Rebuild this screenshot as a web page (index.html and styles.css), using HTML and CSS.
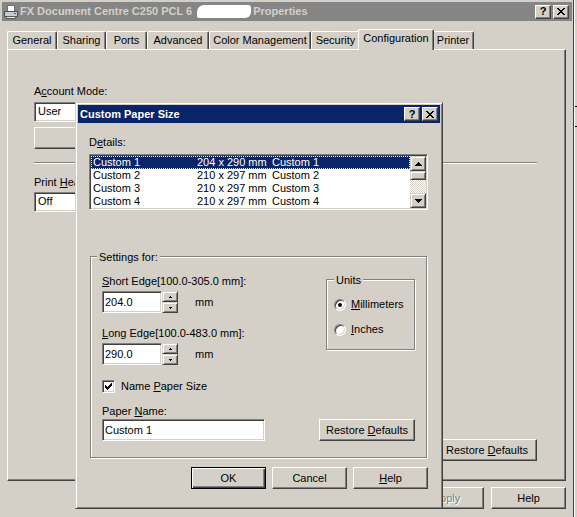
FILE: index.html
```html
<!DOCTYPE html>
<html>
<head>
  <title>Custom Paper Size</title>
  <link rel="stylesheet" href="styles.css">
</head>
<body>
  <div class="desk">
    <div class="win">
      <div class="titlebar inactive">
        <svg class="app-icon" viewBox="0 0 16 16">
          <rect x="4.5" y="1.5" width="7" height="6" fill="#ffffff" stroke="#707070"/>
          <path d="M1.5 7.5h13v5h-13z" fill="#c8ccd6" stroke="#4a4a58"/>
          <path d="M3.5 12.5h9v2h-9z" fill="#ececec" stroke="#5a5a5a"/>
          <rect x="11" y="9" width="2" height="1" fill="#2f7f2f"/>
        </svg>
        <span class="title-text">FX Document Centre C250 PCL 6<span class="redact"></span>Properties</span>
        <span class="cap-btn">?</span>
        <span class="cap-btn">
          <svg class="x-glyph" viewBox="0 0 8 7"><path d="M0 0h2v1h-2zM6 0h2v1h-2zM1 1h2v1h-2zM5 1h2v1h-2zM2 2h4v1h-4zM3 3h2v1h-2zM2 4h4v1h-4zM1 5h2v1h-2zM5 5h2v1h-2zM0 6h2v1h-2zM6 6h2v1h-2z"/></svg>
        </span>
      </div>

      <div class="tabs">
        <div class="tab t-general">General</div>
        <div class="tab t-sharing">Sharing</div>
        <div class="tab t-ports">Ports</div>
        <div class="tab t-advanced">Advanced</div>
        <div class="tab t-color">Color Management</div>
        <div class="tab t-security">Security</div>
        <div class="tab active t-config">Configuration</div>
        <div class="tab t-printer">Printer</div>
      </div>

      <div class="panel">
        <div class="lbl">A<u>c</u>count Mode:</div>
        <div class="edit combo">User</div>
        <button class="btn wide-btn"></button>
        <div class="sep"></div>
        <div class="lbl lbl-print">Print <u>H</u>eader Sheet:</div>
        <div class="edit combo combo-off">Off</div>
        <button class="btn restore-outer"><span>Restore <u>D</u>efaults</span></button>
      </div>

      <div class="win-btns">
        <button class="btn">OK</button>
        <button class="btn">Cancel</button>
        <button class="btn disabled">Apply</button>
        <button class="btn">Help</button>
      </div>
    </div>
    <div class="side">
      <div class="side-mark mark-1"></div>
      <div class="side-mark mark-2"></div>
    </div>
  </div>

  <div class="dialog">
    <div class="titlebar active">
      <span class="title-text">Custom Paper Size</span>
      <span class="cap-btn">?</span>
      <span class="cap-btn">
        <svg class="x-glyph" viewBox="0 0 8 7"><path d="M0 0h2v1h-2zM6 0h2v1h-2zM1 1h2v1h-2zM5 1h2v1h-2zM2 2h4v1h-4zM3 3h2v1h-2zM2 4h4v1h-4zM1 5h2v1h-2zM5 5h2v1h-2zM0 6h2v1h-2zM6 6h2v1h-2z"/></svg>
      </span>
    </div>

    <div class="dlg-body">
      <div class="lbl">D<u>e</u>tails:</div>
      <div class="listbox">
        <div class="rows">
          <div class="row sel"><span>Custom 1</span><span>204 x 290 mm</span><span>Custom 1</span></div>
          <div class="row"><span>Custom 2</span><span>210 x 297 mm</span><span>Custom 2</span></div>
          <div class="row"><span>Custom 3</span><span>210 x 297 mm</span><span>Custom 3</span></div>
          <div class="row"><span>Custom 4</span><span>210 x 297 mm</span><span>Custom 4</span></div>
        </div>
        <div class="vscroll">
          <div class="raised sb-btn">
            <svg class="arrow7" viewBox="0 0 7 4"><path d="M3 0h1v1h-1zM2 1h3v1h-3zM1 2h5v1h-5zM0 3h7v1h-7z"/></svg>
          </div>
          <div class="raised sb-thumb"></div>
          <div class="sb-track"></div>
          <div class="raised sb-btn">
            <svg class="arrow7" viewBox="0 0 7 4"><path d="M0 0h7v1h-7zM1 1h5v1h-5zM2 2h3v1h-3zM3 3h1v1h-1z"/></svg>
          </div>
        </div>
      </div>

      <div class="group settings">
        <div class="group-label">Settings for:</div>
        <div class="settings-top">
          <div class="edges">
            <div class="lbl"><u>S</u>hort Edge[100.0-305.0 mm]:</div>
            <div class="spin-row">
              <div class="edit num">204.0</div>
              <div class="spin">
                <div class="raised spin-btn"><svg class="arrow3" viewBox="0 0 3 2"><path d="M1 0h1v1h-1zM0 1h3v1h-3z"/></svg></div>
                <div class="raised spin-btn"><svg class="arrow3" viewBox="0 0 3 2"><path d="M0 0h3v1h-3zM1 1h1v1h-1z"/></svg></div>
              </div>
              <span class="unit">mm</span>
            </div>
            <div class="lbl lbl-long"><u>L</u>ong Edge[100.0-483.0 mm]:</div>
            <div class="spin-row">
              <div class="edit num">290.0</div>
              <div class="spin">
                <div class="raised spin-btn"><svg class="arrow3" viewBox="0 0 3 2"><path d="M1 0h1v1h-1zM0 1h3v1h-3z"/></svg></div>
                <div class="raised spin-btn"><svg class="arrow3" viewBox="0 0 3 2"><path d="M0 0h3v1h-3zM1 1h1v1h-1z"/></svg></div>
              </div>
              <span class="unit">mm</span>
            </div>
          </div>

          <div class="group units">
            <div class="group-label">Units</div>
            <div class="radio-row first">
              <span class="radio checked"></span><span><u>M</u>illimeters</span>
            </div>
            <div class="radio-row">
              <span class="radio"></span><span><u>I</u>nches</span>
            </div>
          </div>
        </div>

        <div class="check-row">
          <span class="checkbox">
            <svg class="tick" viewBox="0 0 7 7"><path d="M6 0h1v3h-1zM5 1h1v3h-1zM4 2h1v3h-1zM0 2h1v3h-1zM1 3h1v3h-1zM2 4h1v3h-1zM3 3h1v3h-1z"/></svg>
          </span>
          <span>Name <u>P</u>aper Size</span>
        </div>

        <div class="lbl lbl-name">Paper <u>N</u>ame:</div>
        <div class="name-row">
          <div class="edit name">Custom 1</div>
          <button class="btn restore"><span>Restore <u>D</u>efaults</span></button>
        </div>
      </div>

      <div class="dlg-btns">
        <button class="btn default">OK</button>
        <button class="btn">Cancel</button>
        <button class="btn"><span><u>H</u>elp</span></button>
      </div>
    </div>
  </div>
</body>
</html>
```

FILE: styles.css
```css
* {
  box-sizing: border-box;
}

body {
  margin: 0;
  padding: 0;
  overflow: hidden;
  background-color: #d4d0c8;
  font-family: "Liberation Sans", Arial, sans-serif;
  font-size: 11px;
  line-height: 13px;
  color: #000000;
}

u {
  text-decoration-thickness: 1px;
  text-underline-offset: 1px;
}

/* ---- common controls ---- */

.btn {
  width: 75px;
  height: 22px;
  padding: 0;
  display: flex;
  align-items: center;
  justify-content: center;
  font: inherit;
  white-space: nowrap;
  color: #000000;
  background-color: #d4d0c8;
  border: 1px solid;
  border-color: #ffffff #404040 #404040 #ffffff;
  border-radius: 0;
  box-shadow: inset -1px -1px #808080;
}

.btn.default {
  border-color: #000000;
  box-shadow: inset 1px 1px #ffffff, inset -1px -1px #404040, inset -2px -2px #808080;
}

.btn.disabled {
  color: #808080;
  text-shadow: 1px 1px #ffffff;
}

.raised {
  background-color: #d4d0c8;
  border: 1px solid;
  border-color: #d4d0c8 #404040 #404040 #d4d0c8;
  box-shadow: inset 1px 1px #ffffff, inset -1px -1px #808080;
  display: flex;
  align-items: center;
  justify-content: center;
}

.edit {
  background-color: #ffffff;
  border: 1px solid;
  border-color: #808080 #ffffff #ffffff #808080;
  box-shadow: inset 1px 1px #404040, inset -1px -1px #d4d0c8;
  white-space: nowrap;
}

.desk {
  display: flex;
  height: 517px;
}

/* ---- outer properties window ---- */

.win {
  width: 574px;
  height: 517px;
  flex-shrink: 0;
  padding: 2px 1px 0 2px;
  border-right: 1px solid #404040;
  display: flex;
  flex-direction: column;
}

.side {
  flex: 1;
  border-left: 1px solid #ffffff;
  display: flex;
  flex-direction: column;
}

.side-mark {
  height: 1px;
  background-color: #000000;
}

.mark-1 {
  margin-top: 106px;
}

.mark-2 {
  margin-top: 19px;
}

.titlebar {
  display: flex;
  align-items: center;
  height: 19px;
  padding: 0 3px 0 1px;
}

.titlebar.inactive {
  background-color: #858585;
  color: #d4d0c8;
}

.titlebar.active {
  height: 18px;
  padding: 0 2px 0 2px;
  background-color: #0a246a;
  color: #ffffff;
}

.app-icon {
  width: 16px;
  height: 16px;
  margin-right: 1px;
  flex-shrink: 0;
}

.title-text {
  flex: 1;
  font-weight: bold;
  white-space: nowrap;
  overflow: hidden;
}

.redact {
  display: inline-block;
  width: 54px;
  height: 13px;
  margin: 0 2px 0 5px;
  vertical-align: -3px;
  background-color: #ffffff;
  border-radius: 7px 3px 6px 2px;
}

.cap-btn {
  width: 16px;
  height: 14px;
  flex-shrink: 0;
  display: flex;
  align-items: center;
  justify-content: center;
  background-color: #d4d0c8;
  border: 1px solid;
  border-color: #ffffff #404040 #404040 #ffffff;
  box-shadow: inset -1px -1px #808080;
  color: #000000;
  font-weight: bold;
  font-size: 11px;
}

.cap-btn + .cap-btn {
  margin-left: 2px;
}

.x-glyph {
  width: 8px;
  height: 7px;
  shape-rendering: crispEdges;
}

.tabs {
  display: flex;
  align-items: flex-end;
  height: 20px;
  margin: 8px 0 0 5px;
}

.tab {
  height: 18px;
  border: 1px solid;
  border-bottom: none;
  border-color: #ffffff #404040 #ffffff #ffffff;
  border-radius: 2px 2px 0 0;
  box-shadow: inset -1px 0 #808080;
  text-align: center;
  line-height: 17px;
  white-space: nowrap;
}

.tab.active {
  height: 21px;
  margin: 0 -2px -1px;
  position: relative;
  z-index: 1;
  background-color: #d4d0c8;
  line-height: 16px;
}

.t-general { width: 50px; }
.t-sharing { width: 49px; }
.t-ports { width: 41px; }
.t-advanced { width: 62px; }
.t-color { width: 102px; }
.t-security { width: 49px; }
.t-config { width: 76px; }
.t-printer { width: 42px; }

.panel {
  width: 559px;
  height: 432px;
  margin-left: 5px;
  padding: 35px 28px 19px 26px;
  border: 1px solid;
  border-color: #ffffff #404040 #404040 #ffffff;
  box-shadow: inset -1px -1px #808080;
  display: flex;
  flex-direction: column;
  align-items: flex-start;
}

.sep {
  align-self: stretch;
  height: 2px;
  margin-top: 13px;
  border-top: 1px solid #808080;
  border-bottom: 1px solid #ffffff;
}

.lbl-print {
  margin-top: 12px;
}

.combo {
  width: 236px;
  height: 20px;
  margin-top: 4px;
  line-height: 16px;
  padding-left: 3px;
}

.combo-off {
  margin-top: 3px;
}

.wide-btn {
  width: 100px;
  margin-top: 5px;
}

.restore-outer {
  width: 100px;
  margin-top: auto;
  align-self: flex-end;
}

.win-btns {
  display: flex;
  justify-content: flex-end;
  gap: 7px;
  margin-top: 6px;
  padding-right: 6px;
}

/* ---- custom paper size dialog ---- */

.dialog {
  position: absolute;
  left: 75px;
  top: 102px;
  width: 368px;
  height: 407px;
  padding: 2px;
  background-color: #d4d0c8;
  border: 1px solid;
  border-color: #d4d0c8 #404040 #404040 #d4d0c8;
  box-shadow: inset 1px 1px #ffffff, inset -1px -1px #808080;
  display: flex;
  flex-direction: column;
}

.dlg-body {
  padding: 13px 12px 0 11px;
  display: flex;
  flex-direction: column;
}

.listbox {
  display: flex;
  height: 56px;
  margin-top: 5px;
  padding: 1px;
  background-color: #ffffff;
  border: 1px solid;
  border-color: #808080 #ffffff #ffffff #808080;
  box-shadow: inset 1px 1px #404040, inset -1px -1px #d4d0c8;
}

.rows {
  flex: 1;
}

.row {
  display: grid;
  grid-template-columns: 104px 75px 1fr;
  height: 13px;
  line-height: 13px;
  padding-left: 2px;
  white-space: nowrap;
}

.row.sel {
  background-color: #0a246a;
  color: #ffffff;
  outline: 1px dotted #f0f0d0;
  outline-offset: -1px;
}

.vscroll {
  width: 16px;
  display: flex;
  flex-direction: column;
}

.sb-btn {
  height: 15px;
}

.sb-thumb {
  height: 9px;
}

.sb-track {
  flex: 1;
  background: repeating-conic-gradient(#ffffff 0 25%, #d4d0c8 0 50%) 0 0 / 2px 2px;
}

.arrow7 {
  width: 7px;
  height: 4px;
  shape-rendering: crispEdges;
}

.group {
  border: 1px solid #808080;
  box-shadow: inset 1px 1px #ffffff, 1px 1px #ffffff;
}

.group-label {
  width: fit-content;
  margin-top: -6px;
  padding: 0 2px;
  background-color: #d4d0c8;
}

.settings {
  margin: 46px 1px 0 1px;
  padding: 0 11px 16px 11px;
}

.settings > .group-label {
  margin-left: -5px;
}

.settings-top {
  display: flex;
  margin-top: 11px;
}

.spin-row {
  display: flex;
  align-items: center;
  margin-top: 3px;
}

.lbl-long {
  margin-top: 14px;
}

.num {
  width: 60px;
  height: 22px;
  padding-left: 2px;
  line-height: 20px;
}

.spin {
  width: 16px;
  height: 22px;
  display: flex;
  flex-direction: column;
}

.spin-btn {
  height: 11px;
}

.arrow3 {
  width: 3px;
  height: 2px;
  shape-rendering: crispEdges;
}

.unit {
  margin-left: 17px;
}

.units {
  width: 89px;
  height: 71px;
  margin: 4px 0 0 auto;
  padding-left: 7px;
}

.radio-row {
  display: flex;
  align-items: center;
  gap: 5px;
  height: 13px;
  margin-top: 12px;
}

.radio-row.first {
  margin-top: 11px;
}

.radio {
  width: 12px;
  height: 12px;
  border-radius: 50%;
  background-color: #ffffff;
  border: 1px solid;
  border-color: #808080 #ffffff #ffffff #808080;
  box-shadow: inset 1px 1px #404040, inset -1px -1px #d4d0c8;
  display: flex;
  align-items: center;
  justify-content: center;
}

.radio.checked::after {
  content: "";
  width: 4px;
  height: 4px;
  border-radius: 50%;
  background-color: #000000;
}

.check-row {
  display: flex;
  align-items: center;
  gap: 6px;
  height: 13px;
  margin-top: 15px;
}

.checkbox {
  width: 13px;
  height: 13px;
  background-color: #ffffff;
  border: 1px solid;
  border-color: #808080 #ffffff #ffffff #808080;
  box-shadow: inset 1px 1px #404040, inset -1px -1px #d4d0c8;
  display: flex;
  align-items: center;
  justify-content: center;
}

.tick {
  width: 7px;
  height: 7px;
  shape-rendering: crispEdges;
}

.lbl-name {
  margin-top: 12px;
}

.name-row {
  display: flex;
  margin-top: 1px;
}

.name {
  width: 163px;
  height: 22px;
  padding-left: 2px;
  line-height: 20px;
}

.restore {
  width: 96px;
  margin-left: auto;
}

.dlg-btns {
  display: flex;
  justify-content: flex-end;
  gap: 6px;
  margin-top: 9px;
}
```
